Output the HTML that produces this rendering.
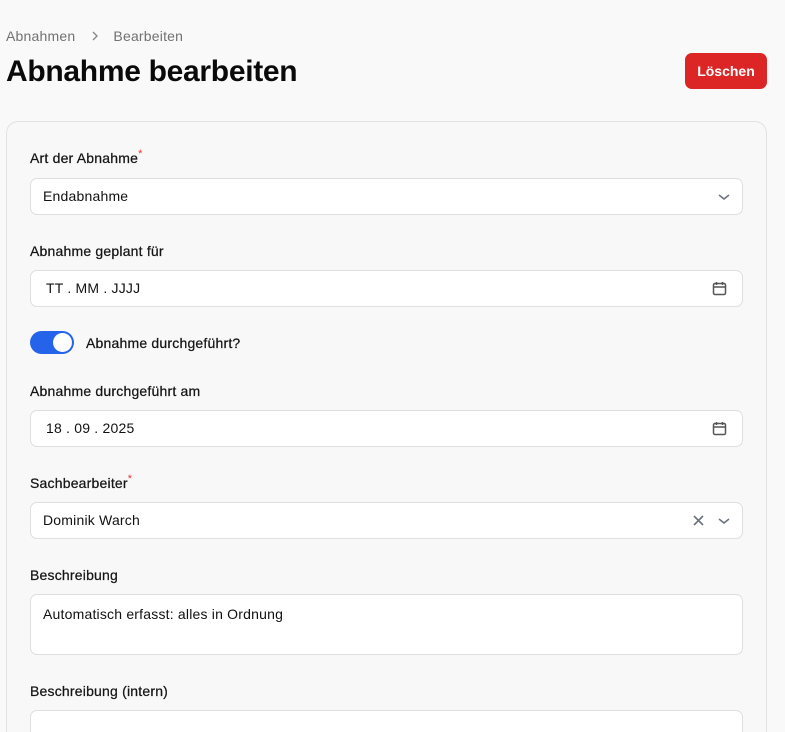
<!DOCTYPE html>
<html><head><meta charset="utf-8"><style>
*{box-sizing:border-box;margin:0;padding:0}
html,body{width:785px;height:732px;overflow:hidden}
body{background:#f9f9f9;font-family:"Liberation Sans",Arial,sans-serif;color:#111;position:relative}
.a{position:absolute}
.bc{top:28px;left:6px;font-size:14px;color:#717171;letter-spacing:0.2px}
h1{position:absolute;left:6px;top:55px;font-size:30px;font-weight:700;letter-spacing:-0.3px;color:#0a0a0a}
.btn{left:685px;top:53px;width:82px;height:36px;background:#dc2626;border-radius:7px;color:#fff;font-weight:700;font-size:14px;text-align:center;line-height:36px}
.card{left:6px;top:121px;width:761px;height:611px;border:1px solid #e2e2e2;border-bottom:none;border-radius:12px 12px 0 0;background:#f8f8f8}
.lbl{left:30px;font-size:14px;color:#151515;letter-spacing:0.2px;-webkit-text-stroke:0.25px #151515}
.lbl sup{color:#e53935;font-size:11px;position:relative;top:-2px;vertical-align:top;-webkit-text-stroke:0}
.in{left:30px;width:713px;height:37px;background:#fff;border:1px solid #dedede;border-radius:7px;font-size:14px;padding-left:12px;line-height:35px;color:#111;letter-spacing:0.2px}
.ic{position:absolute;top:10px}
</style></head><body>
<div class="a bc">Abnahmen <svg style="margin:0 14px 0 12px" width="8" height="10" viewBox="0 0 8 10"><path d="M2 1l4 4-4 4" fill="none" stroke="#888" stroke-width="1.4"/></svg>Bearbeiten</div>
<h1>Abnahme bearbeiten</h1>
<div class="a btn">Löschen</div>
<div class="a card"></div>

<div class="a lbl" style="top:150px">Art der Abnahme<sup>*</sup></div>
<div class="a in" style="top:178px">Endabnahme
<svg class="ic" style="left:687px;top:13px" width="12" height="10" viewBox="0 0 12 10"><path d="M1 3l5 4 5-4" fill="none" stroke="#6b7280" stroke-width="1.6"/></svg></div>

<div class="a lbl" style="top:243px">Abnahme geplant für</div>
<div class="a in" style="top:270px;padding-left:15px">TT . MM . JJJJ
<svg class="ic" style="left:681px;top:10px" width="15" height="15" viewBox="0 0 15 15"><rect x="1.5" y="2.5" width="12" height="11" rx="1.5" fill="none" stroke="#555" stroke-width="1.5"/><path d="M1.5 6h12M4.5 1v3M10.5 1v3" stroke="#555" stroke-width="1.5"/></svg></div>

<div class="a" style="left:30px;top:331px;width:44px;height:23px;border-radius:12px;background:#2563eb"><div style="position:absolute;right:2px;top:2px;width:19px;height:19px;border-radius:50%;background:#fff"></div></div>
<div class="a lbl" style="left:86px;top:335px">Abnahme durchgeführt?</div>

<div class="a lbl" style="top:383px">Abnahme durchgeführt am</div>
<div class="a in" style="top:410px;padding-left:15px">18 . 09 . 2025
<svg class="ic" style="left:681px;top:10px" width="15" height="15" viewBox="0 0 15 15"><rect x="1.5" y="2.5" width="12" height="11" rx="1.5" fill="none" stroke="#555" stroke-width="1.5"/><path d="M1.5 6h12M4.5 1v3M10.5 1v3" stroke="#555" stroke-width="1.5"/></svg></div>

<div class="a lbl" style="top:475px">Sachbearbeiter<sup>*</sup></div>
<div class="a in" style="top:502px">Dominik Warch
<svg class="ic" style="left:662px;top:12px" width="11" height="11" viewBox="0 0 11 11"><path d="M1 1l9 9M10 1l-9 9" stroke="#6b7280" stroke-width="1.6"/></svg>
<svg class="ic" style="left:687px;top:13px" width="12" height="10" viewBox="0 0 12 10"><path d="M1 3l5 4 5-4" fill="none" stroke="#6b7280" stroke-width="1.6"/></svg></div>

<div class="a lbl" style="top:567px">Beschreibung</div>
<div class="a in" style="top:594px;height:61px;line-height:normal;padding-top:11px">Automatisch erfasst: alles in Ordnung</div>

<div class="a lbl" style="top:683px">Beschreibung (intern)</div>
<div class="a in" style="top:710px;height:22px;border-bottom:none;border-radius:7px 7px 0 0"></div>
</body></html>
